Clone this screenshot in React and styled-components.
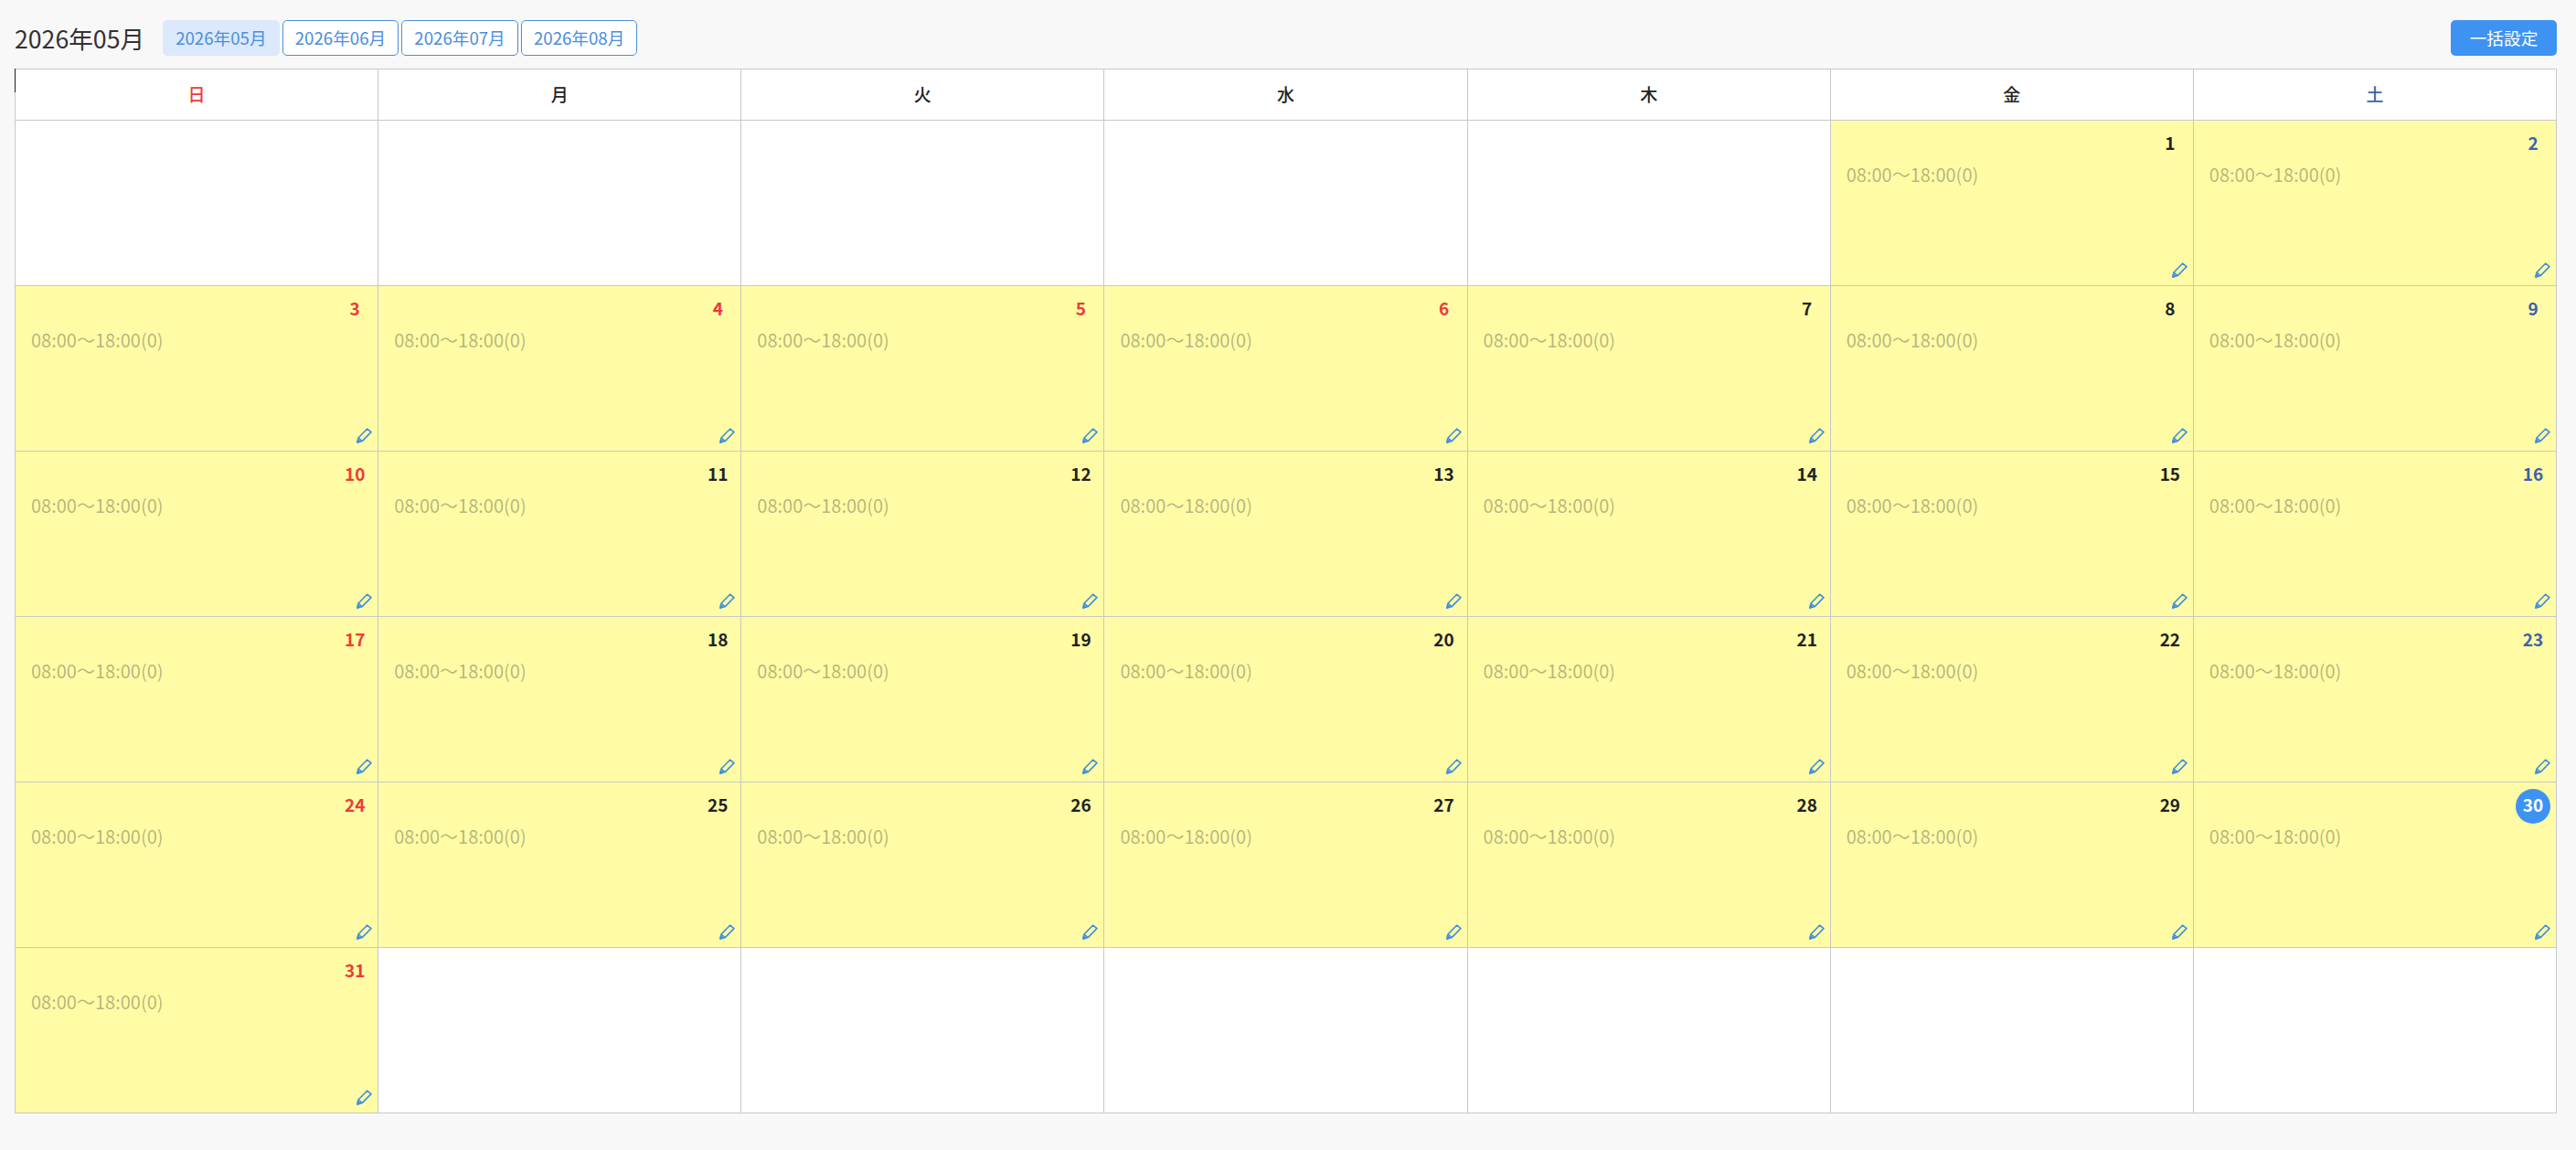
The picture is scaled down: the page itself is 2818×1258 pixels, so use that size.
import React from 'react'
import styled, { createGlobalStyle } from 'styled-components'

const GlobalStyle = createGlobalStyle`
  html, body {
    margin: 0;
    background: #f8f8f8;
    color: #333;
    font-family: "Noto Sans CJK JP", "Noto Sans", sans-serif;
    font-size: 18.67px;
  }
`

const Page = styled.div`
  padding: 22px 21px 41px 16px;
`

const Toolbar = styled.div`
  display: flex;
  align-items: center;
  height: 39px;
  margin-bottom: 14px;
`

const Title = styled.h1`
  margin: 0 20px 0 0;
  font-size: 26.67px;
  font-weight: 400;
  line-height: 39px;
  color: #333;
`

const MonthTabs = styled.div`
  display: flex;
  gap: 3px;
`

const MonthTab = styled.button`
  box-sizing: border-box;
  width: 127.6px;
  height: 39px;
  padding: 0;
  border: 1px solid ${p => (p.$active ? '#dbe9fb' : '#4a8fdc')};
  border-radius: 5px;
  background: ${p => (p.$active ? '#dbe9fb' : '#fff')};
  color: #4a8ee0;
  font: inherit;
  line-height: 1;
`

const BulkButton = styled.button`
  box-sizing: border-box;
  width: 116px;
  height: 39px;
  margin-left: auto;
  padding: 0;
  border: 0;
  border-radius: 5px;
  background: #3e93f2;
  color: #fff;
  font: inherit;
  line-height: 1;
`

const Calendar = styled.div`
  position: relative;
  display: grid;
  grid-template-columns: repeat(7, 1fr);
  grid-template-rows: 56px repeat(6, 181px);
  box-sizing: border-box;
  width: 2781px;
  border-top: 1px solid #c8c8c8;
  border-left: 1px solid #c8c8c8;

  /* text cursor left on the top corner */
  &::before {
    content: '';
    position: absolute;
    left: -1px;
    top: -1px;
    width: 1px;
    height: 26px;
    background: #222;
  }
`

const dayColor = p => (p.$tone === 'sun' ? '#ee3a3a' : p.$tone === 'sat' ? '#3b62ad' : '#222')

const WeekHead = styled.div`
  display: flex;
  align-items: center;
  justify-content: center;
  box-sizing: border-box;
  padding-bottom: 2px;
  background: #fff;
  border-right: 1px solid #c8c8c8;
  border-bottom: 1px solid #c8c8c8;
  color: ${dayColor};
  font-size: 19px;
  font-weight: 500;
`

const Cell = styled.div`
  display: flex;
  flex-direction: column;
  box-sizing: border-box;
  padding: 7px 6px 8px 17px;
  background: ${p => (p.$open ? '#fffca5' : '#fff')};
  border-right: 1px solid #c8c8c8;
  border-bottom: 1px solid #c8c8c8;
`

const DayNumber = styled.div`
  align-self: flex-end;
  box-sizing: border-box;
  width: 38px;
  height: 38px;
  padding-bottom: 5px;
  border-radius: 50%;
  background: ${p => (p.$today ? '#3e93f2' : 'transparent')};
  color: ${p => (p.$today ? '#fff' : dayColor(p))};
  font-size: 19px;
  font-weight: 700;
  line-height: 33px;
  text-align: center;
`

const Hours = styled.div`
  color: rgba(60, 60, 60, 0.38);
  font-size: 20px;
  line-height: 28px;
`

const EditIcon = styled.svg`
  align-self: flex-end;
  margin-top: auto;
  width: 17px;
  height: 17px;
  fill: none;
  stroke: #3f8fdc;
  stroke-width: 1.6;
  stroke-linejoin: round;
`

const WEEK = ['日', '月', '火', '水', '木', '金', '土']
const MONTHS = ['2026年05月', '2026年06月', '2026年07月', '2026年08月']
const TONES = { 0: 'sun', 6: 'sat' }
const HOLIDAYS = [3, 4, 5, 6]
const LEADING_BLANKS = 5
const DAYS = 31
const TODAY = 30

const Pencil = () => (
  <EditIcon viewBox="0 0 17 17">
    <path d="M1 16 L2 11 L11.6 1.2 L16 4.6 L6.2 14.6 Z" />
    <path d="M2 11 L6.2 14.6" />
    <path d="M1 16 L1.6 13 L3.8 14.9 Z" fill="#3f8fdc" />
  </EditIcon>
)

const cells = Array.from({ length: 42 }, (_, i) => {
  const day = i - LEADING_BLANKS + 1
  return day >= 1 && day <= DAYS ? day : null
})

const toneOf = (day, i) => (HOLIDAYS.includes(day) ? 'sun' : TONES[i % 7])

export default function App() {
  return (
    <Page>
      <GlobalStyle />
      <Toolbar>
        <Title>2026年05月</Title>
        <MonthTabs>
          {MONTHS.map((m, i) => (
            <MonthTab key={m} $active={i === 0}>{m}</MonthTab>
          ))}
        </MonthTabs>
        <BulkButton>一括設定</BulkButton>
      </Toolbar>
      <Calendar>
        {WEEK.map((w, i) => (
          <WeekHead key={w} $tone={TONES[i]}>{w}</WeekHead>
        ))}
        {cells.map((day, i) =>
          day ? (
            <Cell key={i} $open>
              <DayNumber $tone={toneOf(day, i)} $today={day === TODAY}>{day}</DayNumber>
              <Hours>08:00〜18:00(0)</Hours>
              <Pencil />
            </Cell>
          ) : (
            <Cell key={i} />
          )
        )}
      </Calendar>
    </Page>
  )
}
